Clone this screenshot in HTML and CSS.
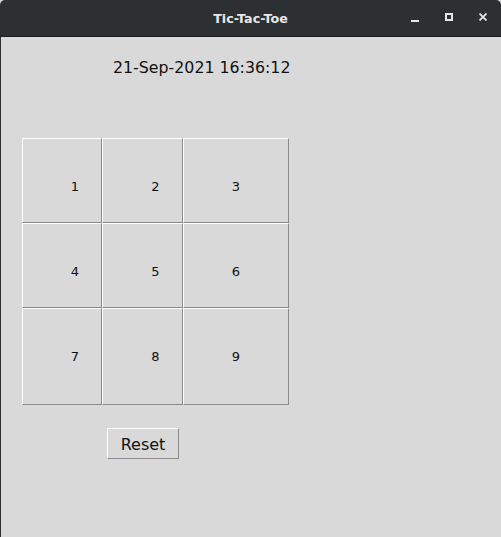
FILE: index.html
```html
<!DOCTYPE html>
<html>
<head>
<meta charset="utf-8">
<link rel="stylesheet" href="styles.css">
</head>
<body>
<div class="window">
  <div class="titlebar">
    <span class="title">Tic-Tac-Toe</span>
    <div class="controls">
      <span class="ctl min"></span>
      <span class="ctl max"></span>
      <span class="ctl close">
        <svg width="8" height="8" viewBox="0 0 8 8"><path d="M0.5 0.5L7.5 7.5M7.5 0.5L0.5 7.5" stroke="#e6e6e6" stroke-width="1.8"/></svg>
      </span>
    </div>
  </div>
  <div class="content">
    <div class="clock">21-Sep-2021 16:36:12</div>
    <div class="board">
      <div class="cell c1 r1">1</div>
      <div class="cell c2 r1">2</div>
      <div class="cell c3 r1">3</div>
      <div class="cell c1 r2">4</div>
      <div class="cell c2 r2">5</div>
      <div class="cell c3 r2">6</div>
      <div class="cell c1 r3">7</div>
      <div class="cell c2 r3">8</div>
      <div class="cell c3 r3">9</div>
    </div>
    <button class="reset">Reset</button>
  </div>
</div>
</body>
</html>
```
FILE: styles.css
```css
html, body {
  margin: 0;
  padding: 0;
}
body {
  width: 501px;
  height: 537px;
  overflow: hidden;
  background: #d9d9d9;
  font-family: "DejaVu Sans", sans-serif;
}
.window {
  display: flex;
  flex-direction: column;
  height: 537px;
}
.titlebar {
  height: 36px;
  background: #2c3033;
  border-bottom: 1px solid #1c1e20;
  border-radius: 5px 5px 0 0;
  position: relative;
  display: flex;
  align-items: center;
  justify-content: center;
}
.title {
  color: #e8e8e8;
  font-family: "DejaVu Sans", sans-serif;
  font-weight: bold;
  font-size: 12.7px;
  margin-top: 1px;
}
.controls {
  position: absolute;
  right: 14px;
  top: 13px;
  display: flex;
  gap: 26px;
}
.ctl {
  width: 8px;
  height: 8px;
  display: block;
  box-sizing: border-box;
}
.min {
  border-bottom: 2px solid #e6e6e6;
  height: 9px;
}
.max {
  border: 2px solid #e6e6e6;
}
.close svg {
  display: block;
}
.content {
  flex: 1;
  border-left: 1px solid #2c3033;
  display: flex;
  flex-direction: column;
  align-items: flex-start;
}
.clock {
  margin-top: 21px;
  margin-left: 112px;
  font-size: 15.8px;
  line-height: 19px;
  color: #111;
}
.board {
  margin-top: 61px;
  margin-left: 21px;
  display: grid;
  grid-template-columns: 80px 81px 106px;
  grid-template-rows: 85px 85px 97px;
}
.cell {
  box-sizing: border-box;
  border: 1px solid;
  border-color: #ffffff #8a8a8a #8a8a8a #ffffff;
  display: flex;
  align-items: center;
  justify-content: center;
  font-size: 13px;
  color: #111;
}
.c1, .c2 {
  padding-left: 26px;
}
.r1, .r2 {
  padding-top: 12px;
}
.reset {
  margin-top: 23px;
  margin-left: 106px;
  width: 72px;
  height: 31px;
  box-sizing: border-box;
  background: #d9d9d9;
  border: 1px solid;
  border-color: #ffffff #8a8a8a #8a8a8a #ffffff;
  font-family: "DejaVu Sans", sans-serif;
  font-size: 16px;
  color: #111;
  padding: 0;
  padding-top: 1px;
}
```
